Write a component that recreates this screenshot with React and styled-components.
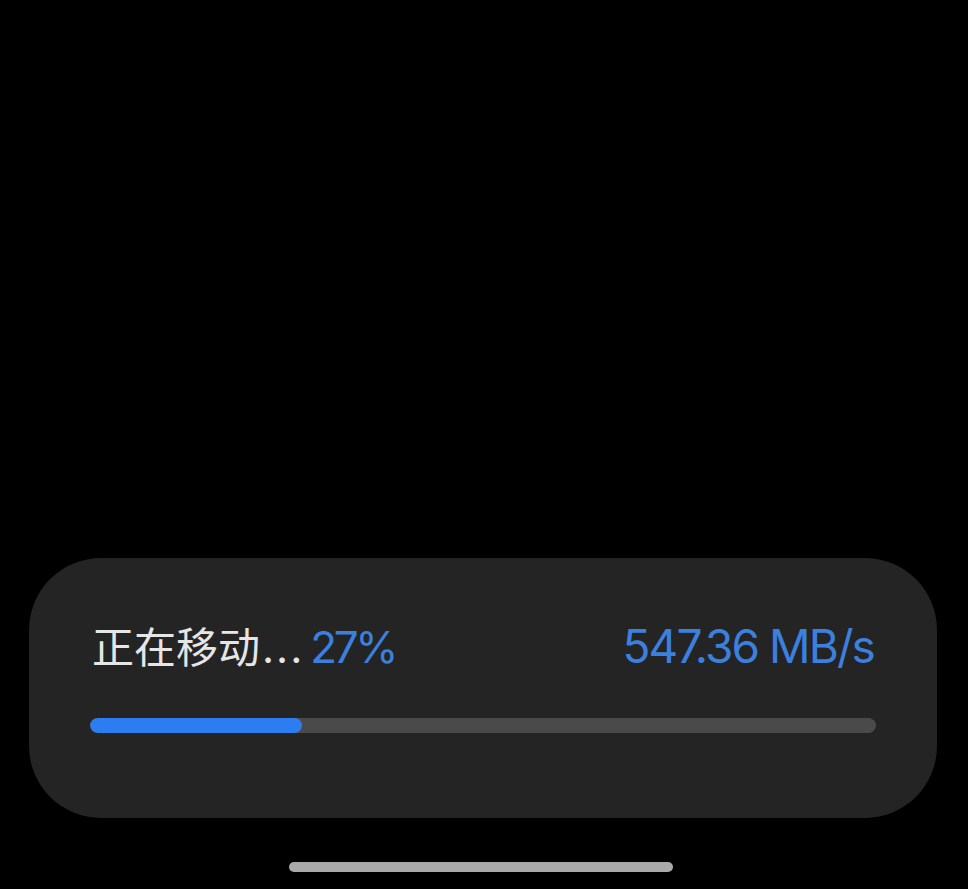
import React from 'react';
import styled, { createGlobalStyle } from 'styled-components';

const GlobalStyle = createGlobalStyle`
  html, body {
    margin: 0;
    padding: 0;
    background: #000;
  }
  body {
    font-family: "Inter", "Noto Sans CJK SC", sans-serif;
  }
`;

const Screen = styled.div`
  width: 968px;
  height: 889px;
  background: #000;
  display: flex;
  flex-direction: column;
  justify-content: flex-end;
  align-items: center;
  overflow: hidden;
`;

const Sheet = styled.div`
  width: 908px;
  height: 260px;
  margin-left: -2px;
  box-sizing: border-box;
  background: #242424;
  border-radius: 72px;
  padding: 57px 61px 0 61px;
  display: flex;
  flex-direction: column;
`;

const StatusRow = styled.div`
  display: flex;
  justify-content: space-between;
  align-items: baseline;
  padding: 0 2px;
  height: 60px;
`;

const Label = styled.div`
  font-family: "Noto Sans CJK SC", sans-serif;
  font-size: 42px;
  color: #e6e6e6;
  line-height: 60px;
  display: flex;
  align-items: baseline;
`;

const Dots = styled.span`
  font-family: "Inter", sans-serif;
  font-size: 42px;
  letter-spacing: 2px;
  margin-left: 2px;
`;

const Figure = styled.span`
  font-family: "Inter", sans-serif;
  font-size: ${(p) => p.size || 46}px;
  letter-spacing: ${(p) => p.spacing ?? -1.9}px;
  color: #3b80de;
  margin-left: ${(p) => p.gap || 0}px;
`;

const Track = styled.div`
  margin-top: 43px;
  height: 15px;
  border-radius: 8px;
  background: #4a4a4a;
  overflow: hidden;
`;

const Fill = styled.div`
  height: 100%;
  border-radius: 8px;
  background: #2c7cf2;
`;

const HomeBar = styled.div`
  width: 384px;
  height: 10px;
  border-radius: 5px;
  background: #a9a9a9;
  margin: 44px 6px 17px 0;
`;

export default function App() {
  const progress = 27;
  return (
    <>
      <GlobalStyle />
      <Screen>
        <Sheet>
          <StatusRow>
            <Label>
              正在移动<Dots>...</Dots>
              <Figure gap={6} size={44} spacing={-3.4}>{progress}%</Figure>
            </Label>
            <Figure>547.36 MB/s</Figure>
          </StatusRow>
          <Track>
            <Fill style={{ width: `${progress}%` }} />
          </Track>
        </Sheet>
        <HomeBar />
      </Screen>
    </>
  );
}
